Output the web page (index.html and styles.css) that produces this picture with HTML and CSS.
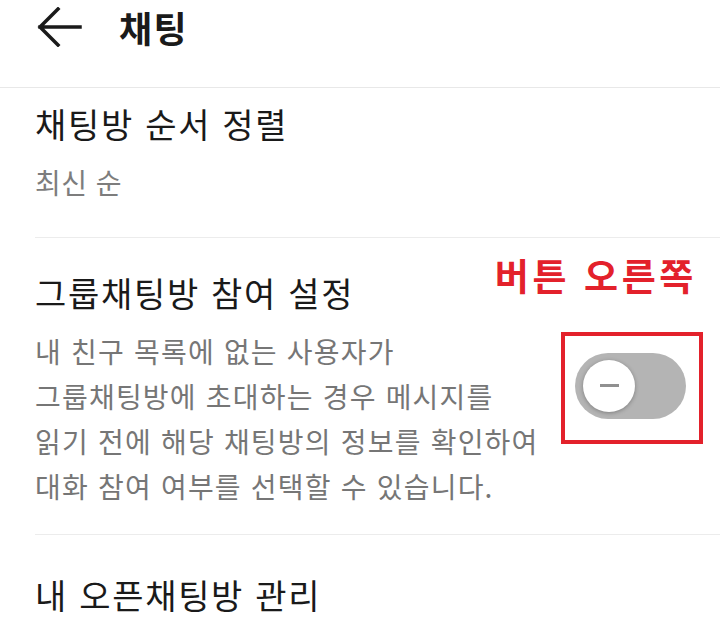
FILE: index.html
```html
<!DOCTYPE html>
<html lang="ko">
  <head>
    <meta charset="UTF-8" />
    <meta name="viewport" content="width=device-width, initial-scale=1.0" />
    <title>채팅 설정</title>
    <link rel="stylesheet" href="styles.css">
  </head>
  <body>
    <div class="topbar">
      <button class="back-btn" aria-label="뒤로">
        <svg width="46" height="40" viewBox="0 0 46 40">
          <path d="M4 20 H44 M22 2 L4 20 L22 38" fill="none" stroke="#1a1a1a" stroke-width="3.5" stroke-linecap="square" stroke-linejoin="miter" />
        </svg>
      </button>
      <h1>채팅</h1>
    </div>

    <div class="section sort">
      <h2>채팅방 순서 정렬</h2>
      <p class="value">최신 순</p>
    </div>

    <div class="section group">
      <span class="note">버튼 오른쪽</span>
      <h2>그룹채팅방 참여 설정</h2>
      <div class="row">
        <p class="desc">
          내 친구 목록에 없는 사용자가<br />
          그룹채팅방에 초대하는 경우 메시지를<br />
          읽기 전에 해당 채팅방의 정보를 확인하여<br />
          대화 참여 여부를 선택할 수 있습니다.
        </p>
        <div class="toggle">
          <span class="knob"></span>
        </div>
      </div>
    </div>

    <div class="section open">
      <h2>내 오픈채팅방 관리</h2>
    </div>
  </body>
</html>
```

FILE: styles.css
```css
* {
  margin: 0;
  padding: 0;
  box-sizing: border-box;
  font-family: "Noto Sans CJK KR", "Noto Sans", sans-serif;
}

body {
  background: #fff;
  color: #1a1a1a;
  width: 720px;
  height: 620px;
  overflow: hidden;
}

.topbar {
  height: 88px;
  border-bottom: 1px solid #e8e8e8;
  display: flex;
  align-items: center;
  padding: 0 0 33px 36px;
}

.back-btn {
  background: none;
  border: none;
  width: 46px;
  height: 40px;
  display: flex;
}

.topbar h1 {
  margin-left: 37px;
  font-size: 36px;
  font-weight: bold;
  letter-spacing: 1.5px;
  line-height: 40px;
}

.section {
  margin-left: 35px;
  position: relative;
}

.section h2 {
  font-size: 34px;
  font-weight: normal;
  letter-spacing: 1.7px;
  line-height: 40px;
  color: #1a1a1a;
}

.sort {
  padding: 16px 0 37px;
  border-bottom: 1px solid #ececec;
}

.sort .value {
  margin-top: 20px;
  font-size: 28px;
  letter-spacing: 0.5px;
  line-height: 36px;
  color: #7d7d7d;
}

.group {
  padding: 35px 0 25px;
  border-bottom: 1px solid #ececec;
}

.note {
  position: absolute;
  top: 17px;
  right: 23px;
  color: #e3212b;
  font-size: 37px;
  font-weight: bold;
  letter-spacing: 3.6px;
  line-height: 40px;
}

.row {
  display: flex;
  align-items: flex-start;
  margin-top: 16px;
}

.desc {
  flex: 1;
  font-size: 28px;
  letter-spacing: 1.2px;
  line-height: 45px;
  color: #767676;
}

/*토글 + 빨간 표시 상자 */
.toggle {
  position: relative;
  width: 111px;
  height: 66px;
  margin: 24px 34px 0 0;
  border-radius: 33px;
  background: #b4b4b4;
}

.toggle::after {
  content: "";
  position: absolute;
  top: -21px;
  bottom: -25px;
  left: -14px;
  right: -17px;
  border: 4px solid #e3212b;
}

.knob {
  position: absolute;
  top: 7px;
  left: 8px;
  width: 52px;
  height: 52px;
  border-radius: 50%;
  background: #fff;
  box-shadow: 0 1px 4px rgba(0, 0, 0, 0.3);
}

.knob::before {
  content: "";
  position: absolute;
  top: 24px;
  left: 17px;
  width: 19px;
  height: 3px;
  background: #909090;
}

.open {
  padding-top: 40px;
}
```
